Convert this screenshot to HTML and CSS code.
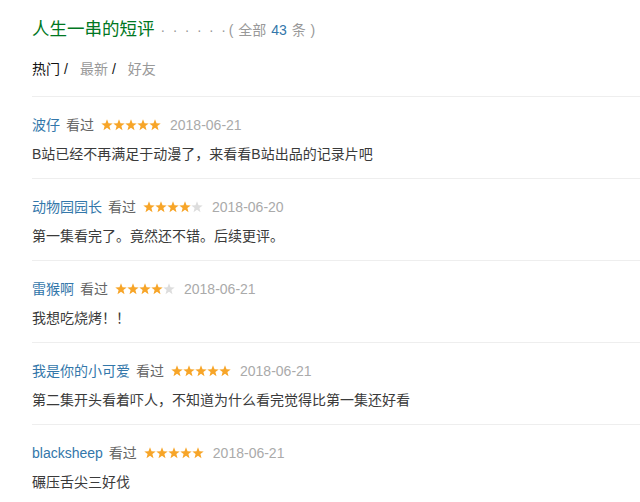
FILE: index.html
```html
<!DOCTYPE html>
<html lang="zh-CN">

<head>
    <meta charset="UTF-8">
    <meta name="viewport" content="width=device-width, initial-scale=1.0">
    <title>短评</title>
    <link rel="stylesheet" href="styles.css">
</head>

<body>
    <svg class="defs" width="0" height="0">
        <symbol id="star" viewBox="0 0 12 12">
            <polygon points="6,0.3 7.5,4.2 11.7,4.4 8.4,7.1 9.5,11.2 6,8.8 2.5,11.2 3.6,7.1 0.3,4.4 4.5,4.2"></polygon>
        </symbol>
    </svg>

    <div class="comments">
        <h2 class="title">人生一串的短评<span class="dots">· · · · · ·</span><span class="all">( 全部 <a>43</a> 条 )</span></h2>

        <ul class="tabs">
            <li class="on">热门<i>/</i></li>
            <li>最新<i>/</i></li>
            <li>好友</li>
        </ul>

        <div class="comment">
            <div class="info">
                <a class="name">波仔</a>
                <span class="seen">看过</span>
                <span class="stars">
                    <svg class="on"><use href="#star"></use></svg><svg class="on"><use href="#star"></use></svg><svg class="on"><use href="#star"></use></svg><svg class="on"><use href="#star"></use></svg><svg class="on"><use href="#star"></use></svg>
                </span>
                <span class="date">2018-06-21</span>
            </div>
            <p class="text">B站已经不再满足于动漫了，来看看B站出品的记录片吧</p>
        </div>

        <div class="comment">
            <div class="info">
                <a class="name">动物园园长</a>
                <span class="seen">看过</span>
                <span class="stars">
                    <svg class="on"><use href="#star"></use></svg><svg class="on"><use href="#star"></use></svg><svg class="on"><use href="#star"></use></svg><svg class="on"><use href="#star"></use></svg><svg><use href="#star"></use></svg>
                </span>
                <span class="date">2018-06-20</span>
            </div>
            <p class="text">第一集看完了。竟然还不错。后续更评。</p>
        </div>

        <div class="comment">
            <div class="info">
                <a class="name">雷猴啊</a>
                <span class="seen">看过</span>
                <span class="stars">
                    <svg class="on"><use href="#star"></use></svg><svg class="on"><use href="#star"></use></svg><svg class="on"><use href="#star"></use></svg><svg class="on"><use href="#star"></use></svg><svg><use href="#star"></use></svg>
                </span>
                <span class="date">2018-06-21</span>
            </div>
            <p class="text">我想吃烧烤！！</p>
        </div>

        <div class="comment">
            <div class="info">
                <a class="name">我是你的小可爱</a>
                <span class="seen">看过</span>
                <span class="stars">
                    <svg class="on"><use href="#star"></use></svg><svg class="on"><use href="#star"></use></svg><svg class="on"><use href="#star"></use></svg><svg class="on"><use href="#star"></use></svg><svg class="on"><use href="#star"></use></svg>
                </span>
                <span class="date">2018-06-21</span>
            </div>
            <p class="text">第二集开头看着吓人，不知道为什么看完觉得比第一集还好看</p>
        </div>

        <div class="comment">
            <div class="info">
                <a class="name">blacksheep</a>
                <span class="seen">看过</span>
                <span class="stars">
                    <svg class="on"><use href="#star"></use></svg><svg class="on"><use href="#star"></use></svg><svg class="on"><use href="#star"></use></svg><svg class="on"><use href="#star"></use></svg><svg class="on"><use href="#star"></use></svg>
                </span>
                <span class="date">2018-06-21</span>
            </div>
            <p class="text">碾压舌尖三好伐</p>
        </div>
    </div>
</body>

</html>
```

FILE: styles.css
```css
* {
    padding: 0;
    margin: 0;
}

ul,
li {
    list-style: none;
}

body {
    background: #fff;
    font-family: "Liberation Sans", "Noto Sans CJK SC", sans-serif;
    font-size: 14px;
    color: #494949;
}

.defs {
    position: absolute;
}

.comments {
    padding: 17px 0 0 32px;
}

.title {
    font-size: 17.5px;
    font-weight: normal;
    line-height: 24px;
    color: #072;
}

.title .dots {
    color: #999;
    font-size: 14px;
    letter-spacing: 1.8px;
    margin-left: 6px;
}

.title .all {
    color: #999;
    font-size: 14px;
    word-spacing: 1px;
    margin-left: 1px;
}

.title .all a {
    color: #37a;
}

.tabs {
    display: flex;
    margin-top: 16px;
    line-height: 22px;
}

.tabs li {
    color: #999;
    margin-right: 12px;
}

.tabs li.on {
    color: #111;
}

.tabs li i {
    font-style: normal;
    color: #111;
    margin-left: 4px;
}

.comment {
    margin-top: 16px;
    border-top: 1px solid #eee;
    padding: 17px 0 13px;
}

.comments .comment + .comment {
    margin-top: 0;
}

.info {
    display: flex;
    align-items: center;
    line-height: 22px;
}

.name {
    color: #37a;
}

.seen {
    color: #666;
    margin-left: 6px;
}

.stars {
    display: flex;
    margin-left: 7px;
}

.stars svg {
    width: 12px;
    height: 12px;
    fill: #ddd;
}

.stars svg.on {
    fill: #f7a528;
}

.date {
    color: #aaa;
    margin-left: 9px;
}

.text {
    margin-top: 7px;
    line-height: 22px;
    color: #3a3a3a;
}
```
